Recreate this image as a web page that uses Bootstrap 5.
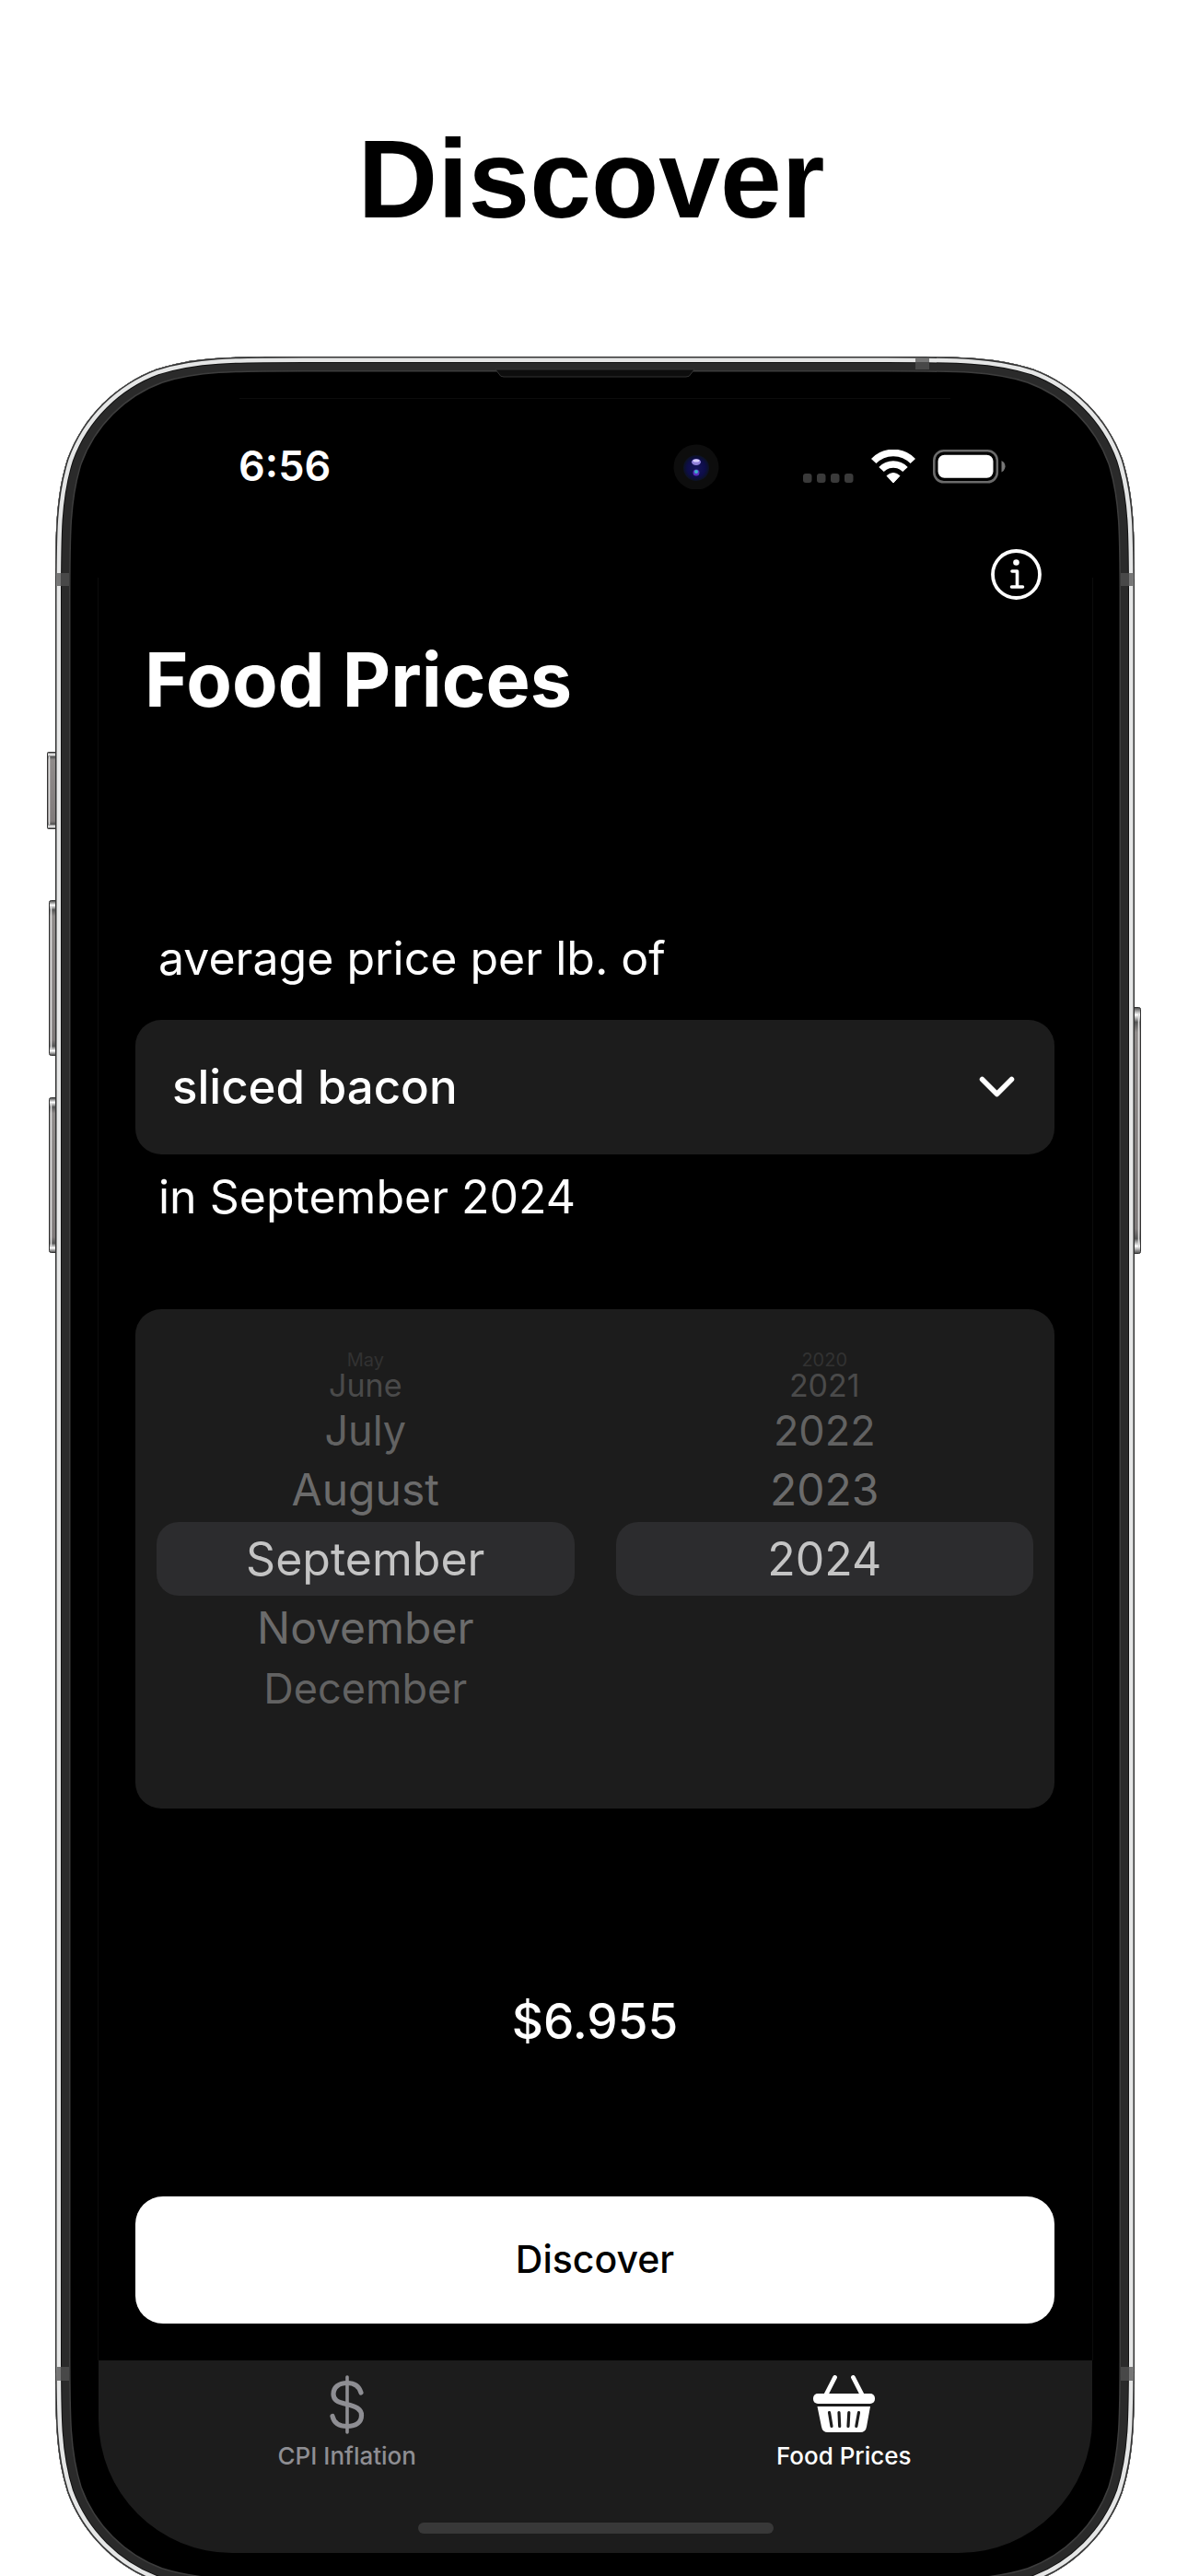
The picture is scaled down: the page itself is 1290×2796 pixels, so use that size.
<!DOCTYPE html>
<html lang="en">
<head>
<meta charset="utf-8">
<meta name="viewport" content="width=device-width, initial-scale=1">
<title>Discover – Food Prices</title>
<link href="https://cdn.jsdelivr.net/npm/bootstrap@5.3.0/dist/css/bootstrap.min.css" rel="stylesheet">
<style>
  body { background: #fff; font-family: Inter, "Liberation Sans", sans-serif; }
  .stage { min-height: 100vh; overflow: hidden; }
  .headline { font: 700 120px/120px "Liberation Sans", Arial, sans-serif; color: #000; padding: 134px 6px 133px 0; }

  .phone { margin: 0 58px -20px 60px; padding: 45px 46px 45px 47px; color: #fff; }
  .phone-frame { top: 0; left: 0; overflow: visible; }
  .screen { border-radius: 0 0 145px 145px; overflow: hidden; }

  .status-row { height: 148px; padding: 0 94px 0 152px; }
  .clock { font-size: 45px; line-height: 48px; font-weight: 600; }
  .status-icons { gap: 19px; margin-left: 91px; }
  .top-actions { height: 87px; padding-right: 55px; }
  .screen-title { font-size: 81px; line-height: 100px; font-weight: 700; margin: 21px 0 220px; padding-left: 50px; }

  .content { padding: 0 41px 0 40px; }
  .phrase { font-size: 50px; line-height: 64px; padding-left: 25px; }
  .food-select {
    height: 146px; margin: 35px 0 14px; padding: 0 40px;
    font-size: 51px; font-weight: 500; color: #fff; background: #1c1c1c;
    border: 0; border-radius: 28px; appearance: none;
  }
  .food-chevron { right: 40px; top: 60px; pointer-events: none; }

  .wheels { background: #1c1c1c; border-radius: 28px; margin-top: 90px; padding: 45px 23px; gap: 45px; }
  .wheel { flex: 1 1 0; min-width: 0; height: 452px; }
  .wheel label { display: flex; align-items: center; justify-content: center; color: #6b6b6b; line-height: 1; }
  .wheel .far3 { height: 20px; font-size: 20px; color: #323232; }
  .wheel .far2 { height: 36px; font-size: 34px; color: #4a4a4a; }
  .wheel .far1 { height: 60px; font-size: 45px; color: #626262; }
  .wheel .near { height: 70px; font-size: 48px; color: #6b6b6b; }
  .wheel .picked { height: 80px; font-size: 50px; color: #c4c4c4; background: #2c2c2e; border-radius: 24px; }

  .price { font-size: 53px; line-height: 64px; font-weight: 500; margin: 199px 0 158px; }
  .go { height: 138px; font-size: 41px; font-weight: 500; border-radius: 30px; background: #fff; color: #000; margin-bottom: 40px; }
  .go:hover { background: #eee; color: #000; }

  .tabs { background: #1c1c1c; padding-top: 16px; }
  .tab-link { color: #8e8e93; font-size: 26px; line-height: 30px; font-weight: 500; gap: 9px; text-decoration: none; }
  .tab-link.active { color: #fff; }
  .home-bar { width: 386px; height: 12px; border-radius: 6px; background: #383838; margin: 57px auto 21px; }
</style>
</head>
<body>
<main class="stage">
  <h1 class="headline text-center m-0">Discover</h1>

  <div class="phone position-relative">
    <!-- device body: metal rim, dark band, side buttons, antenna lines, speaker -->
    <svg class="phone-frame position-absolute w-100 h-100" viewBox="0 0 1172 2429" preserveAspectRatio="none" aria-hidden="true">
      <defs>
        <path id="body" d="M269 0H903C980.400 0 1019.200 0 1060.900 13.200C1106.400 29.800 1142.200 65.600 1158.800 111.100C1172 152.800 1172 191.600 1172 269V2160C1172 2237.400 1172 2276.200 1158.800 2317.900C1142.200 2363.400 1106.400 2399.200 1060.900 2415.800C1019.200 2429 980.400 2429 903 2429H269C191.600 2429 152.800 2429 111.100 2415.800C65.600 2399.200 29.800 2363.400 13.200 2317.900C0 2276.200 0 2237.400 0 2160V269C0 191.600 0 152.800 13.200 111.100C29.800 65.600 65.600 29.800 111.100 13.200C152.800 0 191.600 0 269 0Z"/>
        <clipPath id="bodyClip"><use href="#body"/></clipPath>
        <linearGradient id="key" x1="0" x2="0" y1="0" y2="1">
          <stop offset="0" stop-color="#444"/><stop offset=".03" stop-color="#fff"/><stop offset=".06" stop-color="#555"/><stop offset=".1" stop-color="#8f8b8a"/>
          <stop offset=".9" stop-color="#807b7b"/><stop offset=".94" stop-color="#555"/><stop offset=".97" stop-color="#fff"/><stop offset="1" stop-color="#444"/>
        </linearGradient>
      </defs>
      <g fill="url(#key)" stroke="#333" stroke-width="1">
        <rect x="-8.500" y="429.500" width="12" height="83" rx="1"/>
        <rect x="-6.500" y="590.500" width="10" height="168" rx="2"/>
        <rect x="-6.500" y="804.500" width="10" height="168" rx="2"/>
        <rect x="1168" y="706.500" width="10.500" height="267" rx="2"/>
      </g>
      <path d="M-6.500 434v74M-4.500 597v155M-4.500 811v155M1176.500 713v254" stroke="#ddd" stroke-width="1.500"/>
      <g clip-path="url(#bodyClip)" fill="none">
        <use href="#body" fill="#000"/>
        <use href="#body" stroke="#3d3d3d" stroke-width="33"/>
        <use href="#body" stroke="#2a2a2a" stroke-width="30"/>
        <use href="#body" stroke="#111" stroke-width="14"/>
        <use href="#body" stroke="#e5e6e6" stroke-width="12"/>
        <use href="#body" stroke="#333" stroke-width="3"/>
        <path d="M2 235h13v14H2zM1157 235h13v14h-13zM2 2182h13v15H2zM1157 2182h13v15h-13zM934 2h15v12h-15z" fill="#484848"/>
        <path d="M2 235h4v14H2zM1166 235h4v14h-4zM2 2182h4v15H2zM1166 2182h4v15h-4zM934 2h15v4h-15z" fill="#777"/>
      </g>
      <path d="M478 14h216l-4 5q-1 3-5 3H487q-4 0-5-3z" fill="#0d0d0d" stroke="#333" stroke-width="1"/>
      <path d="M200 45.500H972M46.500 240V2175M1126.500 240V2175" stroke="#0c0c0c" fill="none"/>
    </svg>

    <div class="screen position-relative">
      <div class="status-row d-flex align-items-center">
        <span class="clock">6:56</span>
        <svg class="ms-auto" width="50" height="50" viewBox="0 0 50 50" aria-hidden="true">
          <defs><radialGradient id="lens"><stop offset="0" stop-color="#15155a"/><stop offset=".7" stop-color="#0d0d48"/><stop offset="1" stop-color="#0c1222"/></radialGradient></defs>
          <circle cx="25" cy="26" r="24.500" fill="#0d0d0d"/>
          <circle cx="25" cy="27" r="14" fill="url(#lens)"/>
          <ellipse cx="25" cy="20.500" rx="5" ry="3.500" fill="#8f7fd8"/><ellipse cx="25" cy="19" rx="3.500" ry="1.500" fill="#d9d0ff"/>
          <circle cx="25" cy="32" r="3.500" fill="#5a2fc0"/><circle cx="25" cy="31" r="2" fill="#39b4c8"/>
        </svg>
        <div class="status-icons d-flex">
          <svg width="55" height="37" viewBox="0 0 55 37" fill="#3a3a3a" aria-hidden="true">
            <rect y="26" width="9.500" height="10" rx="3"/><rect x="15" y="26" width="9.500" height="10" rx="3"/><rect x="30" y="26" width="9.500" height="10" rx="3"/><rect x="45" y="26" width="9.500" height="10" rx="3"/>
          </svg>
          <svg width="48" height="37" viewBox="0 0 48 37" aria-hidden="true">
            <path d="M2.700 11.500A29.500 29.500 0 0 1 45.300 11.500M11 20.500A18 18 0 0 1 37 20.500" transform="translate(0 1)" stroke="#fff" stroke-width="7.500" fill="none"/>
            <path d="M24 36l-7-7.500Q24 22.500 31 28.500z" fill="#fff" stroke="#fff" stroke-linejoin="round"/>
          </svg>
          <svg width="79" height="37" viewBox="0 0 79 37" aria-hidden="true">
            <rect x="1.300" y="1.300" width="68.500" height="34" rx="10.500" fill="none" stroke="#6a6a6a" stroke-width="2.600"/>
            <rect x="5.500" y="5.800" width="60" height="25" rx="7" fill="#fff"/>
            <path d="M74.500 12q4 2 4 6.200t-4 6.200z" fill="#777"/>
          </svg>
        </div>
      </div>

      <div class="top-actions d-flex align-items-center justify-content-end">
        <button type="button" class="btn p-0 border-0 d-flex" aria-label="Information">
          <svg width="55" height="55" viewBox="0 0 55 55" fill="none" stroke="#fff" stroke-linecap="round" stroke-linejoin="round">
            <circle cx="27.500" cy="27.500" r="25.500" stroke-width="3.800"/>
            <circle cx="27.500" cy="14.500" r="3.300" fill="#fff" stroke="none"/>
            <path d="M23 24h5.500v17M22.500 41h12" stroke-width="3.600"/>
          </svg>
        </button>
      </div>

      <h2 class="screen-title">Food Prices</h2>

      <form class="content" onsubmit="return false">
        <label class="phrase d-block" for="food">average price per lb. of</label>
        <div class="position-relative">
          <select id="food" class="food-select d-block w-100">
            <option>sliced bacon</option>
          </select>
          <svg class="food-chevron position-absolute" width="44" height="28" viewBox="0 0 44 28" fill="none" aria-hidden="true">
            <path d="M5.500 4.500L21.500 20.500L37.500 4.500" stroke="#fff" stroke-width="5.500" stroke-linecap="round" stroke-linejoin="round"/>
          </svg>
        </div>
        <p class="phrase mb-0">in September 2024</p>

        <div class="wheels d-flex">
          <div class="wheel" role="radiogroup" aria-label="Month">
            <input class="btn-check" type="radio" name="month" id="m5"><label class="far3" for="m5">May</label>
            <input class="btn-check" type="radio" name="month" id="m6"><label class="far2" for="m6">June</label>
            <input class="btn-check" type="radio" name="month" id="m7"><label class="far1" for="m7">July</label>
            <input class="btn-check" type="radio" name="month" id="m8"><label class="near" for="m8">August</label>
            <input class="btn-check" type="radio" name="month" id="m9" checked><label class="picked" for="m9">September</label>
            <input class="btn-check" type="radio" name="month" id="m11"><label class="near" for="m11">November</label>
            <input class="btn-check" type="radio" name="month" id="m12"><label class="far1" for="m12">December</label>
          </div>
          <div class="wheel" role="radiogroup" aria-label="Year">
            <input class="btn-check" type="radio" name="year" id="y20"><label class="far3" for="y20">2020</label>
            <input class="btn-check" type="radio" name="year" id="y21"><label class="far2" for="y21">2021</label>
            <input class="btn-check" type="radio" name="year" id="y22"><label class="far1" for="y22">2022</label>
            <input class="btn-check" type="radio" name="year" id="y23"><label class="near" for="y23">2023</label>
            <input class="btn-check" type="radio" name="year" id="y24" checked><label class="picked" for="y24">2024</label>
          </div>
        </div>

        <output class="price d-block text-center" for="food">$6.955</output>
        <button type="submit" class="go btn w-100 d-block">Discover</button>
      </form>

      <nav class="tabs" aria-label="Sections">
        <div class="row g-0">
          <a href="#cpi" class="tab-link col d-flex flex-column align-items-center">
            <svg width="38" height="64" viewBox="0 0 38 64" fill="none" stroke="currentColor" stroke-linecap="round" aria-hidden="true">
              <path d="M19 2V62" stroke-width="3.600"/>
              <path d="M34 19C32 12 27 8.500 19 8.500C9.500 8.500 4 13.500 4 20.500C4 27 8.500 29.500 18 31.500C29 34 34.500 37 34.500 43.500C34.500 51 29 55.500 19 55.500C10 55.500 4.500 51.500 3 44.500" stroke-width="5.200"/>
            </svg>
            <span>CPI Inflation</span>
          </a>
          <a href="#food-prices" class="tab-link active col d-flex flex-column align-items-center" aria-current="page">
            <svg width="67" height="64" viewBox="0 0 67 64" aria-hidden="true">
              <path d="M23.500 2.500L13 23M43.500 2.500L54 23" stroke="#fff" stroke-width="4.800" stroke-linecap="round"/>
              <rect x="0" y="20" width="67" height="11" rx="5" fill="#fff"/>
              <path d="M4.500 34H62L58 56Q57 62 51 62H16Q10 62 9 56Z" fill="#fff"/>
              <path d="M17.500 40.500L20 55.500M28 40.500L28.700 55.500M38.800 40.500L38 55.500M49.500 40.500L46.800 55.500" stroke="#1c1c1c" stroke-width="3.200" stroke-linecap="round"/>
            </svg>
            <span>Food Prices</span>
          </a>
        </div>
        <div class="d-flex"><div class="home-bar"></div></div>
      </nav>
    </div>
  </div>
</main>
<script src="https://cdn.jsdelivr.net/npm/bootstrap@5.3.0/dist/js/bootstrap.bundle.min.js"></script>
</body>
</html>
